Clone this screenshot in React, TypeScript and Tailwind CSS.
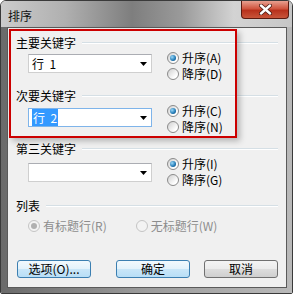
import type { ReactNode } from "react";

const FONT = "font-['Noto_Sans_CJK_SC','Noto_Sans',sans-serif]";

function Radio({ checked, disabled }: { checked?: boolean; disabled?: boolean }) {
  return (
    <span
      className={`flex h-[12px] w-[12px] shrink-0 items-center justify-center rounded-full border ${
        disabled
          ? "border-[#c4c4c4] bg-[#f3f3f3]"
          : "border-[#8a8a8a] bg-[linear-gradient(135deg,#cfcfcf,#ffffff_75%)]"
      }`}
    >
      {checked && (
        <span
          className={`h-[6px] w-[6px] rounded-full ${
            disabled
              ? "bg-[#b0b0b0]"
              : "bg-[radial-gradient(circle_at_35%_35%,#9ad8f8,#1f78b4_60%,#0b3f6b)]"
          }`}
        />
      )}
    </span>
  );
}

function RadioItem({
  label,
  checked,
  disabled,
}: {
  label: string;
  checked?: boolean;
  disabled?: boolean;
}) {
  return (
    <div className="flex h-[16px] items-center gap-[3px]">
      <Radio checked={checked} disabled={disabled} />
      <span className={disabled ? "text-[#8d8d8d]" : "text-black"}>{label}</span>
    </div>
  );
}

function Header({ label }: { label: string }) {
  return (
    <div className="flex h-[14px] items-center gap-[6px]">
      <span>{label}</span>
      <span className="h-[2px] flex-1 border-t border-b border-t-[#d5dfe5] border-b-white" />
    </div>
  );
}

function Combo({ focused, children }: { focused?: boolean; children?: ReactNode }) {
  return (
    <div
      className={`flex h-[19px] w-[124px] items-center border bg-white pl-[3px] pr-[4px] ${
        focused ? "border-[#7eb4ea]" : "border-[#cfcfcf] border-t-[#abadb3]"
      }`}
    >
      <div className="flex-1 whitespace-pre">{children}</div>
      <svg width="7" height="4" viewBox="0 0 7 4">
        <path d="M0 0H7L3.5 4Z" fill="#000" />
      </svg>
    </div>
  );
}

function KeyGroup({
  label,
  value,
  focused,
  up,
  down,
  comboTop,
}: {
  label: string;
  value?: ReactNode;
  focused?: boolean;
  up: string;
  down: string;
  comboTop: string;
}) {
  return (
    <div>
      <Header label={label} />
      <div className="flex">
        <div className={`ml-[12px] ${comboTop}`}>
          <Combo focused={focused}>{value}</Combo>
        </div>
        <div className="ml-[15px] flex flex-col">
          <RadioItem label={up} checked />
          <RadioItem label={down} />
        </div>
      </div>
    </div>
  );
}

function Button({ label, focused }: { label: string; focused?: boolean }) {
  return (
    <div
      className={`flex h-[18px] w-[74px] items-center justify-center rounded-[3px] border ${
        focused
          ? "border-[#3c7fb1] bg-[linear-gradient(#f2f9fd,#e3f2fb_50%,#c9e6f8_51%,#b8def6)]"
          : "border-[#707070] bg-[linear-gradient(#f4f4f4,#ebebeb_50%,#dddddd_51%,#cfcfcf)]"
      }`}
    >
      {label}
    </div>
  );
}

export default function App() {
  return (
    <div
      className={`${FONT} flex h-[294px] w-[293px] flex-col overflow-hidden rounded-t-[6px] rounded-b-[2px] border border-[#3a3a3a] text-[12px] leading-[14px] text-black`}
    >
      {/* barre de titre */}
      <div className="flex h-[26px] items-start justify-between bg-[linear-gradient(90deg,#cbcbcb_0%,#b0b0b0_22%,#7e7e7e_45%,#9a9a9a_62%,#d3d3d3_80%,#c6c6c6_100%)]">
        <span className="pl-[7px] pt-[8px] text-[#111]">排序</span>
        <div className="mr-[3px] flex h-[18px] w-[48px] items-center justify-center rounded-b-[4px] border border-t-0 border-[#5b1a10] bg-[linear-gradient(#e8a090,#d0553f_45%,#b8311c_55%,#c8553a)]">
          <svg width="13" height="11" viewBox="0 0 13 11">
            <path d="M2 1.5L11 9.5M11 1.5L2 9.5" stroke="#4a1a12" strokeWidth="4" strokeLinecap="round" />
            <path d="M2 1.5L11 9.5M11 1.5L2 9.5" stroke="#fff" strokeWidth="2.4" strokeLinecap="round" />
          </svg>
        </div>
      </div>

      {/* cadre + zone client */}
      <div className="flex flex-1 bg-[linear-gradient(90deg,#6a6a6a,#9c9c9c_50%,#b9b9b9)] pb-[5px] pl-[6px] pr-[5px]">
        <div className="relative flex-1 border border-[#5a5a5a] bg-[#f0f0f0] px-[8px] pt-[8px]">
          <KeyGroup label="主要关键字" value="行  1" up="升序(A)" down="降序(D)" comboTop="mt-[4px]" />
          <div className="mt-[7px]">
            <KeyGroup
              label="次要关键字"
              focused
              value={<span className="bg-[#3399ff] px-[1px] text-white">行  2</span>}
              up="升序(C)"
              down="降序(N)"
              comboTop="mt-[5px]"
            />
          </div>
          <div className="mt-[7px]">
            <KeyGroup label="第三关键字" up="升序(I)" down="降序(G)" comboTop="mt-[7px]" />
          </div>

          <div className="mt-[11px]">
            <Header label="列表" />
            <div className="mt-[5px] flex">
              <div className="ml-[12px]">
                <RadioItem label="有标题行(R)" checked disabled />
              </div>
              <div className="ml-[29px]">
                <RadioItem label="无标题行(W)" disabled />
              </div>
            </div>
          </div>

          <div className="mt-[26px] flex">
            <div className="ml-[1px]">
              <Button label="选项(O)..." focused />
            </div>
            <div className="ml-[25px]">
              <Button label="确定" focused />
            </div>
            <div className="ml-[14px]">
              <Button label="取消" />
            </div>
          </div>

          {/* cadre rouge d'annotation */}
          <div className="pointer-events-none absolute left-[1px] top-[1px] h-[109px] w-[228px] border-2 border-[#cc0000] shadow-[3px_3px_6px_rgba(0,0,0,0.25)]" />
        </div>
      </div>
    </div>
  );
}
